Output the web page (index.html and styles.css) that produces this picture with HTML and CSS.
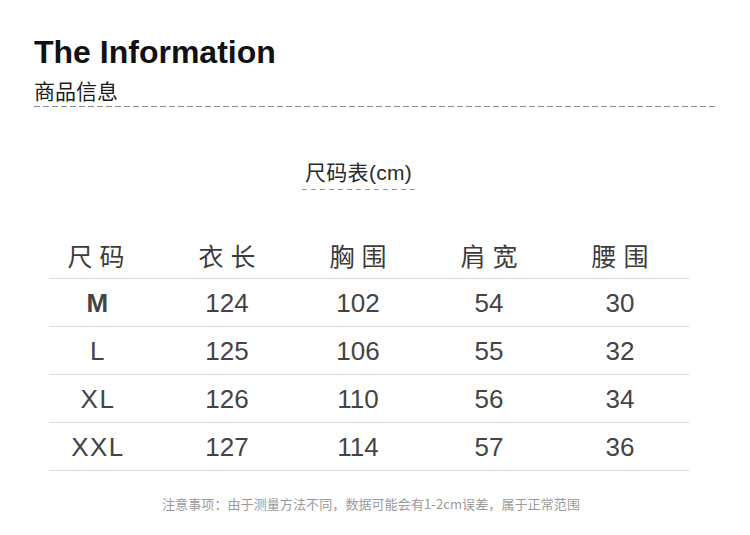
FILE: index.html
```html
<!DOCTYPE html>
<html lang="zh">
<head>
<meta charset="utf-8">
<title>The Information</title>
<link rel="stylesheet" href="styles.css">
</head>
<body>
<div class="page">
  <header class="intro">
    <h1 class="title">The Information</h1>
    <h2 class="subtitle">商品信息</h2>
    <div class="rule"></div>
  </header>

  <div class="caption-wrap">
    <div class="caption">尺码表(cm)</div>
  </div>

  <div class="table">
    <div class="row head">
      <div class="cell">尺码</div>
      <div class="cell">衣长</div>
      <div class="cell">胸围</div>
      <div class="cell">肩宽</div>
      <div class="cell">腰围</div>
    </div>
    <div class="row">
      <div class="cell size bold">M</div>
      <div class="cell">124</div>
      <div class="cell">102</div>
      <div class="cell">54</div>
      <div class="cell">30</div>
    </div>
    <div class="row">
      <div class="cell size">L</div>
      <div class="cell">125</div>
      <div class="cell">106</div>
      <div class="cell">55</div>
      <div class="cell">32</div>
    </div>
    <div class="row">
      <div class="cell size">XL</div>
      <div class="cell">126</div>
      <div class="cell">110</div>
      <div class="cell">56</div>
      <div class="cell">34</div>
    </div>
    <div class="row">
      <div class="cell size">XXL</div>
      <div class="cell">127</div>
      <div class="cell">114</div>
      <div class="cell">57</div>
      <div class="cell">36</div>
    </div>
  </div>

  <p class="note">注意事项：由于测量方法不同，数据可能会有1-2cm误差，属于正常范围</p>
</div>
</body>
</html>
```

FILE: styles.css
```css
html, body {
  margin: 0;
  padding: 0;
  background: #ffffff;
}

.page {
  width: 750px;
  height: 535px;
  overflow: hidden;
  font-family: "Liberation Sans", "Noto Sans CJK SC", sans-serif;
}

.intro {
  padding: 36px 32px 0 34px;
}

.title {
  margin: 0;
  font-family: "Liberation Sans", Arial, sans-serif;
  font-weight: bold;
  font-size: 32px;
  line-height: 32px;
  color: #111111;
}

.subtitle {
  margin: 12px 0 0 0;
  font-family: "Noto Sans CJK SC", sans-serif;
  font-weight: normal;
  font-size: 21px;
  line-height: 21px;
  color: #1c1c1c;
}

.rule {
  margin-top: 5px;
  width: 684px;
  height: 1px;
  background-image: repeating-linear-gradient(to right, #8a8a8a 0 6px, transparent 6px 9px);
}

.caption-wrap {
  display: flex;
  padding-left: 302px;
  margin-top: 55px;
}

.caption {
  padding: 0 3px 7px 3px;
  font-family: "Liberation Sans", "Noto Sans CJK SC", sans-serif;
  font-size: 21px;
  line-height: 21px;
  letter-spacing: 0.3px;
  color: #2a2a2a;
  background-image: repeating-linear-gradient(to right, #9a9a9a 0 5px, transparent 5px 9px);
  background-size: 100% 1px;
  background-repeat: no-repeat;
  background-position: left bottom;
}

.table {
  margin: 42px 0 0 49px;
  width: 640px;
}

.row {
  display: grid;
  grid-template-columns: repeat(5, 94px);
  column-gap: 37px;
  height: 47px;
  align-items: center;
  border-bottom: 1px solid #d9d9d9;
}

.row.head {
  height: 46px;
}

.cell {
  text-align: center;
  font-family: "Liberation Sans", Arial, sans-serif;
  font-size: 26px;
  line-height: 30px;
  color: #444444;
}

.head .cell {
  font-family: "Noto Sans CJK SC", sans-serif;
  font-size: 25px;
  letter-spacing: 7px;
  padding-left: 7px;
  color: #3c3c3c;
}

.size {
  letter-spacing: 1.5px;
  padding-left: 4px;
}

.bold {
  font-weight: bold;
}

.note {
  margin: 24px 0 0 0;
  padding-right: 8px;
  text-align: center;
  font-family: "Noto Sans CJK SC", sans-serif;
  font-size: 13px;
  line-height: 18px;
  letter-spacing: 0.1px;
  color: #9a9a9a;
}
```
